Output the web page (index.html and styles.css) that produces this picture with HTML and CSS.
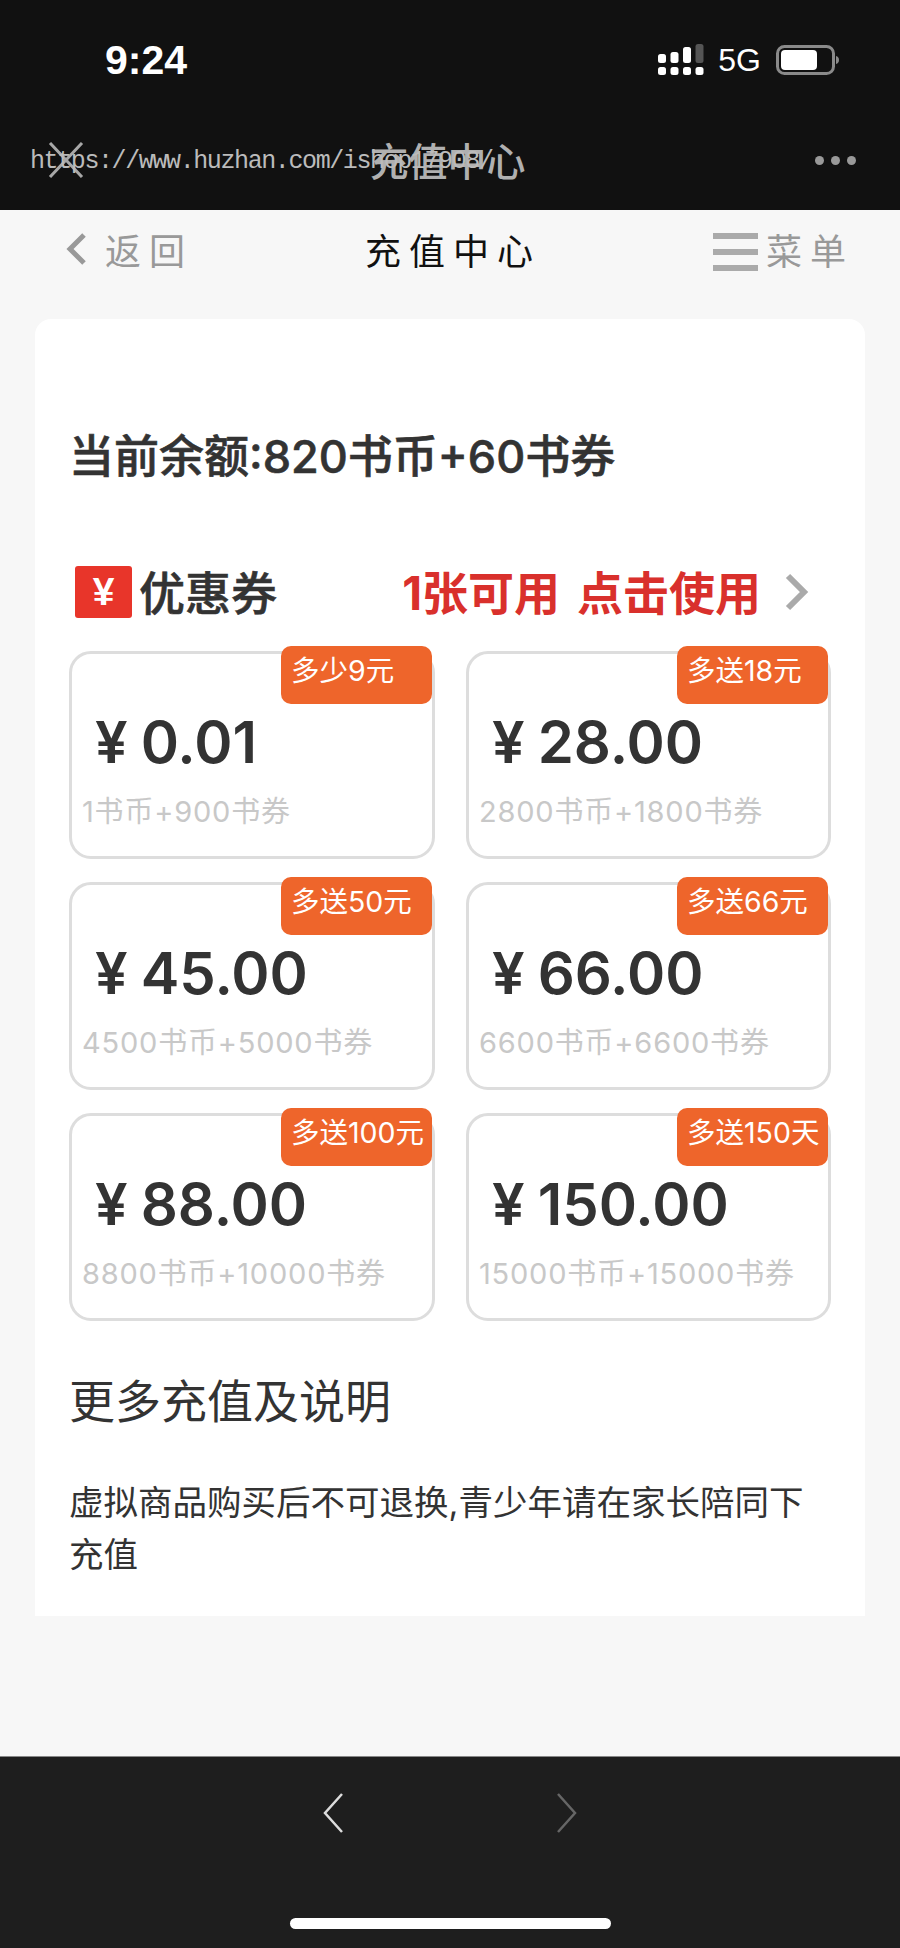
FILE: index.html
```html
<!DOCTYPE html>
<html lang="zh-CN">
<head>
    <meta charset="UTF-8">
    <meta name="viewport" content="width=device-width, initial-scale=1.0">
    <title>充值中心</title>
    <link rel="stylesheet" href="styles.css">
</head>
<body>

<div class="phone">
    <header class="top-bar">
        <div class="status-bar">
            <span class="time">9:24</span>
            <div class="status-right">
                <svg class="signal" width="46" height="32" viewBox="0 0 46 32">
                    <rect x="0" y="23" width="8" height="8" rx="2.500" fill="#fff"/>
                    <rect x="12.500" y="23" width="8" height="8" rx="2.500" fill="#fff"/>
                    <rect x="25" y="23" width="8" height="8" rx="2.500" fill="#fff"/>
                    <rect x="37.500" y="23" width="8" height="8" rx="2.500" fill="#fff"/>
                    <rect x="0" y="10" width="8" height="9" rx="2.500" fill="#fff"/>
                    <rect x="12.500" y="8" width="8" height="11" rx="2.500" fill="#fff"/>
                    <rect x="25" y="3" width="8" height="16" rx="2.500" fill="#fff"/>
                    <rect x="37.500" y="0" width="8" height="19" rx="2.500" fill="#555"/>
                </svg>
                <span class="net">5G</span>
                <svg class="battery" width="64" height="30" viewBox="0 0 64 30">
                    <rect x="1.500" y="1.500" width="56" height="27" rx="7" fill="none" stroke="#8a8a8a" stroke-width="3"/>
                    <rect x="5" y="5" width="36" height="20" rx="4" fill="#fff"/>
                    <path d="M60 11c2 .5 3 2 3 4s-1 3.500-3 4z" fill="#8a8a8a"/>
                </svg>
            </div>
        </div>
        <div class="title-bar">
            <svg class="close-icon" width="36" height="36" viewBox="0 0 36 36">
                <path d="M2 1L34 35M34 1L2 35" stroke="#a8a8a8" stroke-width="3" fill="none"/>
            </svg>
            <span class="app-title">充值中心</span>
            <div class="more"><i></i><i></i><i></i></div>
            <span class="watermark">https://www.huzhan.com/ishop17908/</span>
        </div>
    </header>

    <main class="content">
        <nav class="nav">
            <div class="nav-back">
                <svg width="22" height="34" viewBox="0 0 22 34">
                    <path d="M19 3L5 17L19 31" stroke="#999" stroke-width="5" fill="none"/>
                </svg>
                <span>返回</span>
            </div>
            <div class="nav-title">充值中心</div>
            <div class="nav-menu">
                <div class="burger"><i></i><i></i><i></i></div>
                <span>菜单</span>
            </div>
        </nav>

        <section class="card">
            <h1 class="balance">当前余额:820书币+60书券</h1>

            <div class="coupon-row">
                <div class="coupon-left">
                    <span class="coupon-icon">¥</span>
                    <span class="coupon-name">优惠券</span>
                </div>
                <div class="coupon-right">
                    <span class="coupon-use">1张可用 点击使用</span>
                    <svg width="24" height="38" viewBox="0 0 24 38">
                        <path d="M3 3L19 19L3 35" stroke="#aaa" stroke-width="6" fill="none"/>
                    </svg>
                </div>
            </div>

            <div class="price-grid">
                <div class="price-item">
                    <span class="badge">多少9元</span>
                    <div class="price"><span class="yen">¥</span>0.01</div>
                    <div class="detail">1书币+900书券</div>
                </div>
                <div class="price-item">
                    <span class="badge">多送18元</span>
                    <div class="price"><span class="yen">¥</span>28.00</div>
                    <div class="detail">2800书币+1800书券</div>
                </div>
                <div class="price-item">
                    <span class="badge">多送50元</span>
                    <div class="price"><span class="yen">¥</span>45.00</div>
                    <div class="detail">4500书币+5000书券</div>
                </div>
                <div class="price-item">
                    <span class="badge">多送66元</span>
                    <div class="price"><span class="yen">¥</span>66.00</div>
                    <div class="detail">6600书币+6600书券</div>
                </div>
                <div class="price-item">
                    <span class="badge">多送100元</span>
                    <div class="price"><span class="yen">¥</span>88.00</div>
                    <div class="detail">8800书币+10000书券</div>
                </div>
                <div class="price-item">
                    <span class="badge">多送150天</span>
                    <div class="price"><span class="yen">¥</span>150.00</div>
                    <div class="detail">15000书币+15000书券</div>
                </div>
            </div>

            <h2 class="more-title">更多充值及说明</h2>
            <p class="notice">虚拟商品购买后不可退换,青少年请在家长陪同下充值</p>
        </section>
    </main>

    <footer class="bottom-bar">
        <div class="arrows">
            <svg width="22" height="40" viewBox="0 0 22 40">
                <path d="M20 1L3 20L20 39" stroke="#ddd" stroke-width="2.500" fill="none"/>
            </svg>
            <svg width="22" height="40" viewBox="0 0 22 40">
                <path d="M2 1L19 20L2 39" stroke="#666" stroke-width="2.500" fill="none"/>
            </svg>
        </div>
        <div class="home-bar"></div>
    </footer>
</div>

</body>
</html>
```

FILE: styles.css
```css
* {
    box-sizing: border-box;
}
body {
    margin: 0;
    font-family: Inter, "Noto Sans CJK SC", sans-serif;
    background-color: #f7f7f7;
}
.phone {
    width: 900px;
    height: 1948px;
    display: flex;
    flex-direction: column;
    overflow: hidden;
}

/* barre du haut */
.top-bar {
    height: 210px;
    background-color: #111;
    flex-shrink: 0;
}
.status-bar {
    height: 112px;
    padding: 40px 60px 0 105px;
    display: flex;
    justify-content: space-between;
    align-items: flex-start;
    color: white;
}
.time {
    font-family: "Liberation Sans", sans-serif;
    font-size: 41px;
    font-weight: bold;
    line-height: 40px;
}
.status-right {
    display: flex;
    align-items: center;
    height: 40px;
}
.signal {
    margin-right: 14px;
}
.net {
    font-family: "Liberation Sans", sans-serif;
    font-size: 32px;
    margin-right: 15px;
}
.title-bar {
    position: relative;
    height: 98px;
    padding: 30px 44px 0 48px;
    display: flex;
    justify-content: space-between;
    align-items: flex-start;
}
.app-title {
    font-size: 39px;
    line-height: 40px;
    font-weight: 500;
    color: #b0b0b0;
    margin-left: -4px;
}
.more {
    display: flex;
    gap: 7px;
    margin-top: 14px;
}
.more i {
    width: 9px;
    height: 9px;
    border-radius: 50%;
    background-color: #999;
}
.watermark {
    position: absolute;
    left: 30px;
    top: 35px;
    font-family: "Liberation Mono", monospace;
    font-size: 25px;
    letter-spacing: -1.4px;
    color: #bbb;
    white-space: nowrap;
}

/* contenu */
.content {
    flex: 1;
}
.nav {
    height: 78px;
    padding: 0 46px 0 65px;
    display: flex;
    align-items: center;
    justify-content: space-between;
    font-size: 36px;
    letter-spacing: 8px;
}
.nav-back, .nav-menu {
    display: flex;
    align-items: center;
    color: #999;
}
.nav-back {
    gap: 18px;
}
.nav-title {
    color: #111;
}
.nav-menu {
    gap: 8px;
}
.burger {
    width: 45px;
    margin-top: 5px;
    display: flex;
    flex-direction: column;
    gap: 10px;
}
.burger i {
    height: 6px;
    background-color: #aaa;
}
.card {
    margin: 31px 35px 0;
    height: 1297px;
    background-color: white;
    border-radius: 16px 16px 0 0;
    padding: 0 34px;
}
.balance {
    margin: 0;
    padding-top: 112px;
    font-size: 45px;
    line-height: 52px;
    font-weight: 500;
    -webkit-text-stroke: 0.6px #333;
    color: #333;
}
.coupon-row {
    margin-top: 83px;
    padding-left: 6px;
    height: 52px;
    display: flex;
    justify-content: space-between;
    align-items: center;
}
.coupon-left {
    display: flex;
    align-items: center;
    gap: 7px;
}
.coupon-icon {
    width: 57px;
    height: 52px;
    background-color: #e8352a;
    border-radius: 3px;
    color: white;
    font-family: "Liberation Sans", sans-serif;
    font-size: 39px;
    font-weight: bold;
    line-height: 52px;
    text-align: center;
}
.coupon-name {
    font-size: 46px;
    font-weight: 500;
    -webkit-text-stroke: 0.6px #333;
    color: #333;
    margin-top: -4px;
}
.coupon-right {
    display: flex;
    align-items: center;
    gap: 24px;
    padding-right: 22px;
}
.coupon-use {
    font-size: 46px;
    font-weight: bold;
    color: #d9302c;
    word-spacing: 6px;
    margin-top: -4px;
}
.price-grid {
    margin-top: 33px;
    display: grid;
    grid-template-columns: 366px 365px;
    grid-auto-rows: 208px;
    column-gap: 31px;
    row-gap: 23px;
}
.price-item {
    position: relative;
    border: 3px solid #ddd;
    border-radius: 22px;
    padding: 53px 0 0 23px;
}
.badge {
    position: absolute;
    top: -8px;
    right: 0;
    width: 151px;
    height: 58px;
    padding-left: 10px;
    background-color: #ee652b;
    border-radius: 10px;
    color: white;
    font-size: 28.5px;
    line-height: 50px;
    white-space: nowrap;
}
.price {
    font-size: 58px;
    font-weight: 600;
    line-height: 70px;
    color: #333;
    white-space: nowrap;
}
.yen {
    margin-right: 13px;
}
.detail {
    margin: 17px 0 0 -13px;
    font-size: 29px;
    line-height: 36px;
    letter-spacing: 0.8px;
    color: #c8c8c8;
    white-space: nowrap;
}
.more-title {
    margin: 50px 0 0;
    font-size: 46px;
    line-height: 60px;
    font-weight: normal;
    color: #333;
}
.notice {
    margin: 46px 0 0;
    font-size: 34.5px;
    line-height: 52px;
    color: #333;
}

/* barre du bas */
.bottom-bar {
    height: 192px;
    background-color: #1e1e1e;
    border-top: 1px solid #888;
    flex-shrink: 0;
}
.arrows {
    display: flex;
    justify-content: center;
    gap: 212px;
    padding-top: 36px;
}
.home-bar {
    width: 321px;
    height: 11px;
    margin: 85px auto 0;
    background-color: white;
    border-radius: 6px;
}
```
